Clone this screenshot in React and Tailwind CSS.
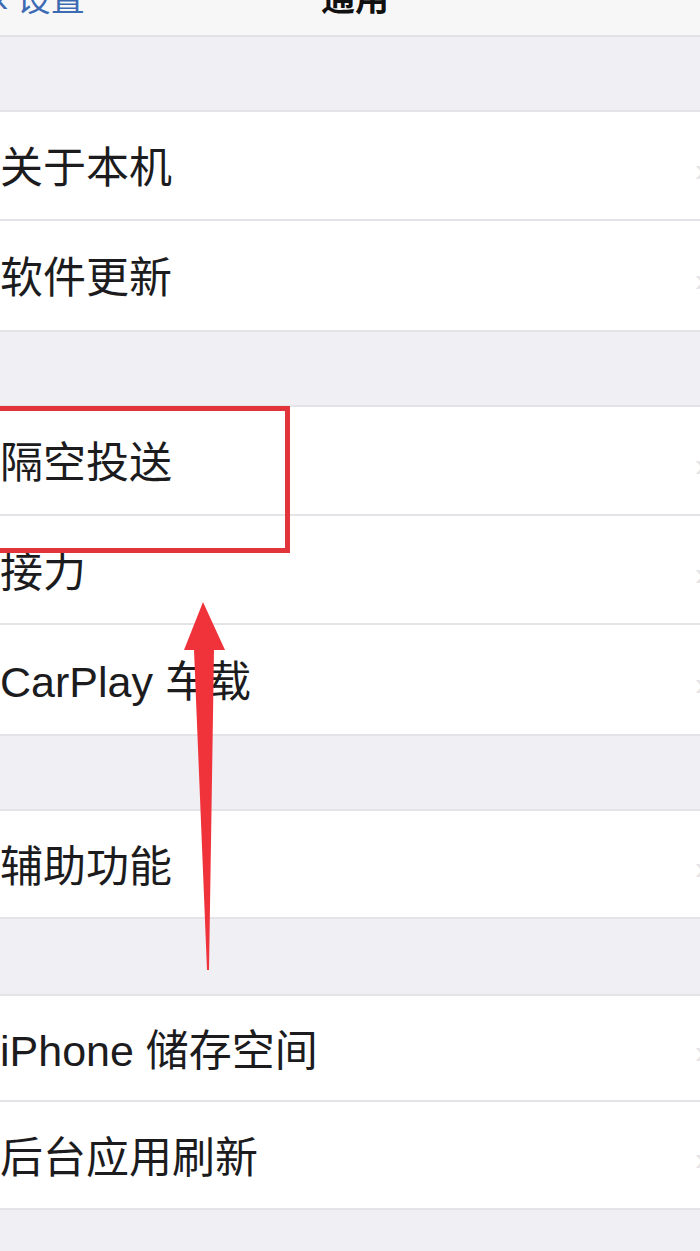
import React from 'react';

// Settings > General list, cropped screenshot with annotation

const groups = [
  { gap: 'h-[73px]', rowH: 'h-[109px]', rows: ['关于本机', '软件更新'] },
  { gap: 'h-[73px]', rowH: 'h-[109px]', rows: ['隔空投送', '接力', 'CarPlay 车载'] },
  { gap: 'h-[73px]', rowH: 'h-[106px]', rows: ['辅助功能'] },
  { gap: 'h-[75px]', rowH: 'h-[106px]', rows: ['iPhone 储存空间', '后台应用刷新'] },
];

function Row({ label, last, rowH }) {
  return (
    <div className={`${rowH} bg-white flex flex-col`}>
      <div className="flex-1 flex items-center justify-between pt-[6px]">
        <span className="text-[43px] leading-none text-[#1c1c1e]">{label}</span>
        <span className="text-[34px] leading-none text-[#e4e4e8] -mr-[6px]">›</span>
      </div>
      {!last && <div className="h-[2px] bg-[#e4e4e8]" />}
    </div>
  );
}

export default function App() {
  return (
    <div
      className="relative w-[700px] h-[1251px] overflow-hidden bg-[#efeff4]"
      style={{ fontFamily: '"Liberation Sans", "Noto Sans CJK SC", sans-serif' }}
    >
      {/* NAV BAR (top cropped) */}
      <div className="h-[37px] bg-[#f7f7f8] border-b-2 border-[#e2e2e6] overflow-hidden flex flex-col justify-end">
        <div className="h-[72px] shrink-0 grid grid-cols-3 items-center">
          <div className="flex items-center gap-2 text-[#3d6bb3] -ml-[4px]">
            <span className="text-[38px] leading-none">‹</span>
            <span className="text-[34px] leading-none">设置</span>
          </div>
          <div className="text-center pl-[10px] text-[34px] leading-none font-bold text-[#111]">通用</div>
          <div />
        </div>
      </div>

      {groups.map((g, gi) => (
        <div key={gi}>
          <div className={g.gap} />
          <div className="border-y-2 border-[#e4e4e8]">
            {g.rows.map((r, i) => (
              <Row key={r} label={r} rowH={g.rowH} last={i === g.rows.length - 1} />
            ))}
          </div>
        </div>
      ))}

      {/* red highlight box */}
      <div className="absolute left-[-10px] top-[406px] w-[300px] h-[147px] border-[5px] border-[#e2353b]" />

      {/* red arrow */}
      <svg className="absolute left-0 top-0" width="700" height="1251" viewBox="0 0 700 1251">
        <path d="M203 602 L225 650 L214 650 L209 970 L207 970 L194 650 L184 650 Z" fill="#f0333a" />
      </svg>
    </div>
  );
}
